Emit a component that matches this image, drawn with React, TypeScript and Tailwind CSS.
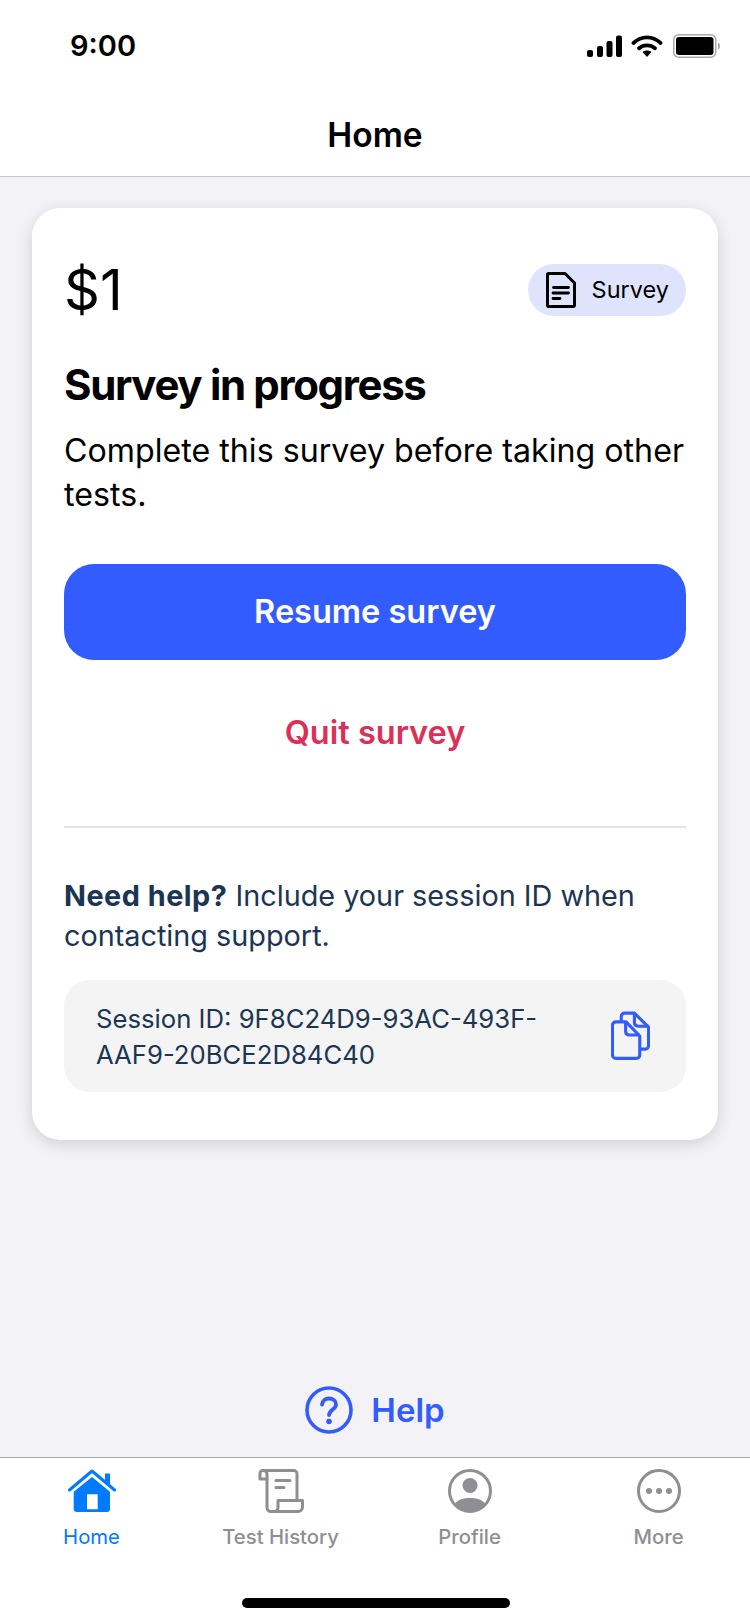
import { FC } from "react";

const font = { fontFamily: "Inter, sans-serif" };

const StatusBar: FC = () => (
  <div className="flex h-[90px] items-start justify-between pl-[70px] pr-[30px] pt-[27px]">
    <span className="text-[29px] leading-[38px] font-semibold text-black">9:00</span>
    <div className="flex items-center pt-[7px]">
      <svg width="35" height="22" viewBox="0 0 35 22">
        <rect x="0" y="15" width="6" height="7" rx="2" fill="#000" />
        <rect x="10" y="11" width="6" height="11" rx="2" fill="#000" />
        <rect x="19.500" y="6" width="6" height="16" rx="2" fill="#000" />
        <rect x="29" y="0.500" width="6" height="21.500" rx="2" fill="#000" />
      </svg>
      <svg width="32" height="22" viewBox="0 0 32 22" fill="none" className="ml-[9px]">
        <path d="M2.500 8C10.500 0.500 21.500 0.500 29.500 8" stroke="#000" strokeWidth="3.800" strokeLinecap="round" />
        <path d="M8 13.200C12.500 9.300 19.500 9.300 24 13.200" stroke="#000" strokeWidth="3.800" strokeLinecap="round" />
        <path d="M11.500 17C14 15 18 15 20.500 17L16 22Z" fill="#000" />
      </svg>
      <svg width="47" height="24" viewBox="0 0 47 24" className="ml-[10px]">
        <rect x="0.750" y="0.750" width="42" height="22.500" rx="5" fill="none" stroke="#a8a8a8" strokeWidth="1.500" />
        <rect x="3" y="3" width="37.500" height="18" rx="3" fill="#000" />
        <path d="M45 8.500C46.500 9 47 10.500 47 12C47 13.500 46.500 15 45 15.500Z" fill="#a8a8a8" />
      </svg>
    </div>
  </div>
);

const DocIcon: FC = () => (
  <svg width="30" height="36" viewBox="0 0 30 36" fill="none" stroke="#000" strokeLinecap="round">
    <path d="M2.500 1.500H19L28.500 11V33C28.500 33.900 27.800 34.500 27 34.500H2.500C1.800 34.500 1.500 33.900 1.500 33V2.800C1.500 2.100 1.800 1.500 2.500 1.500Z" strokeWidth="3" strokeLinejoin="round" />
    <path d="M7.500 15.500H22.500M7 21H22.500M7 26.500H14" strokeWidth="2.800" />
  </svg>
);

const CopyIcon: FC = () => (
  <svg width="39" height="50" viewBox="0 0 40 50" fill="none" stroke="#335cff" strokeWidth="3.200" strokeLinejoin="round">
    <path d="M10.500 10V5C10.500 3 12 1.500 14 1.500H24L38.500 16V35C38.500 37 37 38.500 35 38.500H29" />
    <path d="M24 1.500V11C24 13.500 25.500 15 28 15H38.500" />
    <path d="M5 10.500H15.500L29.500 25V44.500C29.500 46.500 28 48 26 48H5C3 48 1.500 46.500 1.500 44.500V14C1.500 12 3 10.500 5 10.500Z" />
    <path d="M15 10.500V20C15 22.500 16.500 24 19 24H29.500" />
  </svg>
);

const HelpIcon: FC = () => (
  <svg width="48" height="48" viewBox="0 0 48 48" fill="none" stroke="#335cff">
    <circle cx="24" cy="24" r="22" strokeWidth="3.600" />
    <path d="M17 18.500C17.500 14.500 20.500 12.500 24 12.500C28 12.500 31 15 31 18.500C31 23.500 24.500 23.500 24 29" strokeWidth="3.800" strokeLinecap="round" />
    <circle cx="24" cy="35.500" r="2.800" fill="#335cff" stroke="none" />
  </svg>
);

const HomeIcon: FC = () => (
  <svg width="48" height="44" viewBox="0 0 48 44" fill="none">
    <path d="M1.500 21L24 2L46.500 21" stroke="#007aff" strokeWidth="3" strokeLinecap="round" strokeLinejoin="round" />
    <path d="M37 4.500H42V16L37 11.500Z" fill="#007aff" />
    <path fillRule="evenodd" clipRule="evenodd" d="M24 8L42 22.700V40C42 42 41 43 39 43H9C7 43 5.700 42 5.700 40V22.700ZM19 25.300V40.300H29.700V25.300Z" fill="#007aff" />
  </svg>
);

const ScrollIcon: FC = () => (
  <svg width="46" height="44" viewBox="0 0 46 44" fill="none" stroke="#8e8e93" strokeWidth="3" strokeLinecap="round" strokeLinejoin="round">
    <path d="M9 10H2V4C2 2.500 3.500 1.500 5 1.500H36C37.500 1.500 39 3 39 4.500V31" />
    <path d="M5 1.500C7.500 1.500 9 3 9 5V38.500C9 40.800 10.700 42.500 13 42.500H40C42.500 42.500 44.500 40.500 44.500 38V31.500H20V38.500C20 40.800 18.300 42.500 16 42.500" />
    <path d="M18 11.500H32M18 18.500H26" />
  </svg>
);

const ProfileIcon: FC = () => (
  <svg width="44" height="44" viewBox="0 0 44 44" fill="none">
    <circle cx="22" cy="22" r="20.500" stroke="#8e8e93" strokeWidth="3" />
    <circle cx="22" cy="16.500" r="7.500" fill="#8e8e93" />
    <path d="M6.500 35C10 30.500 15.500 29 22 29C28.500 29 34 30.500 37.500 35C33.500 40 28 42 22 42C16 42 10.500 40 6.500 35Z" fill="#8e8e93" />
  </svg>
);

const MoreIcon: FC = () => (
  <svg width="44" height="44" viewBox="0 0 44 44" fill="none">
    <circle cx="22" cy="22" r="20.500" stroke="#8e8e93" strokeWidth="3" />
    <circle cx="12" cy="22" r="3" fill="#8e8e93" />
    <circle cx="22" cy="22" r="3" fill="#8e8e93" />
    <circle cx="32" cy="22" r="3" fill="#8e8e93" />
  </svg>
);

const TABS = [
  { label: "Home", icon: <HomeIcon />, active: true },
  { label: "Test History", icon: <ScrollIcon />, active: false },
  { label: "Profile", icon: <ProfileIcon />, active: false },
  { label: "More", icon: <MoreIcon />, active: false },
];

export default function App() {
  return (
    <div className="flex h-[1624px] w-[750px] flex-col overflow-hidden bg-[#f2f2f7]" style={font}>
      <header className="h-[177px] shrink-0 border-b border-[#c8c8cc] bg-white">
        <StatusBar />
        <h1 className="mt-[23px] text-center text-[33.500px] leading-[44px] font-semibold text-black">Home</h1>
      </header>

      <main className="flex flex-1 flex-col px-[32px] pt-[31px]">
        <section className="h-[932px] rounded-[28px] bg-white px-[32px] pt-[32px] shadow-[0_4px_16px_rgba(0,0,0,0.14)]">
          <div className="flex items-center justify-between pt-[24px]">
            <span className="text-[56px] leading-[52px] font-normal text-black">$1</span>
            <div className="flex h-[52px] items-center gap-[16px] rounded-full bg-[#dfe4fd] pl-[18px] pr-[17px]">
              <DocIcon />
              <span className="text-[23.500px] text-black">Survey</span>
            </div>
          </div>
          <h2 className="mt-[43px] text-[42px] leading-[52px] font-bold tracking-[-1.350px] text-black">Survey in progress</h2>
          <p className="mt-[18px] text-[32.200px] leading-[44px] whitespace-nowrap text-black">
            Complete this survey before taking other
            <br />
            tests.
          </p>
          <button className="mt-[47px] flex h-[96px] w-full items-center justify-center rounded-[30px] bg-[#335cff] pt-[1px] text-[32.500px] font-semibold text-white">
            Resume survey
          </button>
          <div className="mt-[51px] text-center text-[32.500px] leading-[44px] font-semibold text-[#dc3058]">Quit survey</div>
          <div className="mt-[71px] h-[2px] bg-[#e3e3e6]" />
          <p className="mt-[48px] text-[28.800px] leading-[40px] text-[#1c3553]">
            <span className="font-bold tracking-[0.500px]">Need help?</span> Include your session ID when contacting support.
          </p>
          <div className="mt-[24px] flex h-[112px] items-center justify-between rounded-[26px] bg-[#f4f4f5] pl-[32px] pr-[36px]">
            <p className="mt-[1px] w-[470px] text-[25.700px] leading-[36px] text-[#1c3553]">Session ID: 9F8C24D9-93AC-493F-AAF9-20BCE2D84C40</p>
            <CopyIcon />
          </div>
        </section>

        <div className="mt-auto mb-[23px] flex items-center justify-center gap-[18px]">
          <HelpIcon />
          <span className="text-[33px] leading-[44px] font-semibold text-[#335cff]">Help</span>
        </div>
      </main>

      <nav className="relative h-[167px] shrink-0 border-t border-[#a9a9ae] bg-white">
        <div className="-mx-[3px] grid grid-cols-4 pt-[11px]">
          {TABS.map((tab) => (
            <div key={tab.label} className="flex flex-col items-center">
              <div className="flex h-[44px] items-center justify-center">{tab.icon}</div>
              <span className={`mt-[10px] text-[20.300px] leading-[28px] ${tab.active ? "text-[#007aff]" : "font-medium text-[#8e8e93]"}`}>
                {tab.label}
              </span>
            </div>
          ))}
        </div>
        <div className="absolute bottom-[16px] left-[242px] h-[10px] w-[268px] rounded-full bg-black" />
      </nav>
    </div>
  );
}
